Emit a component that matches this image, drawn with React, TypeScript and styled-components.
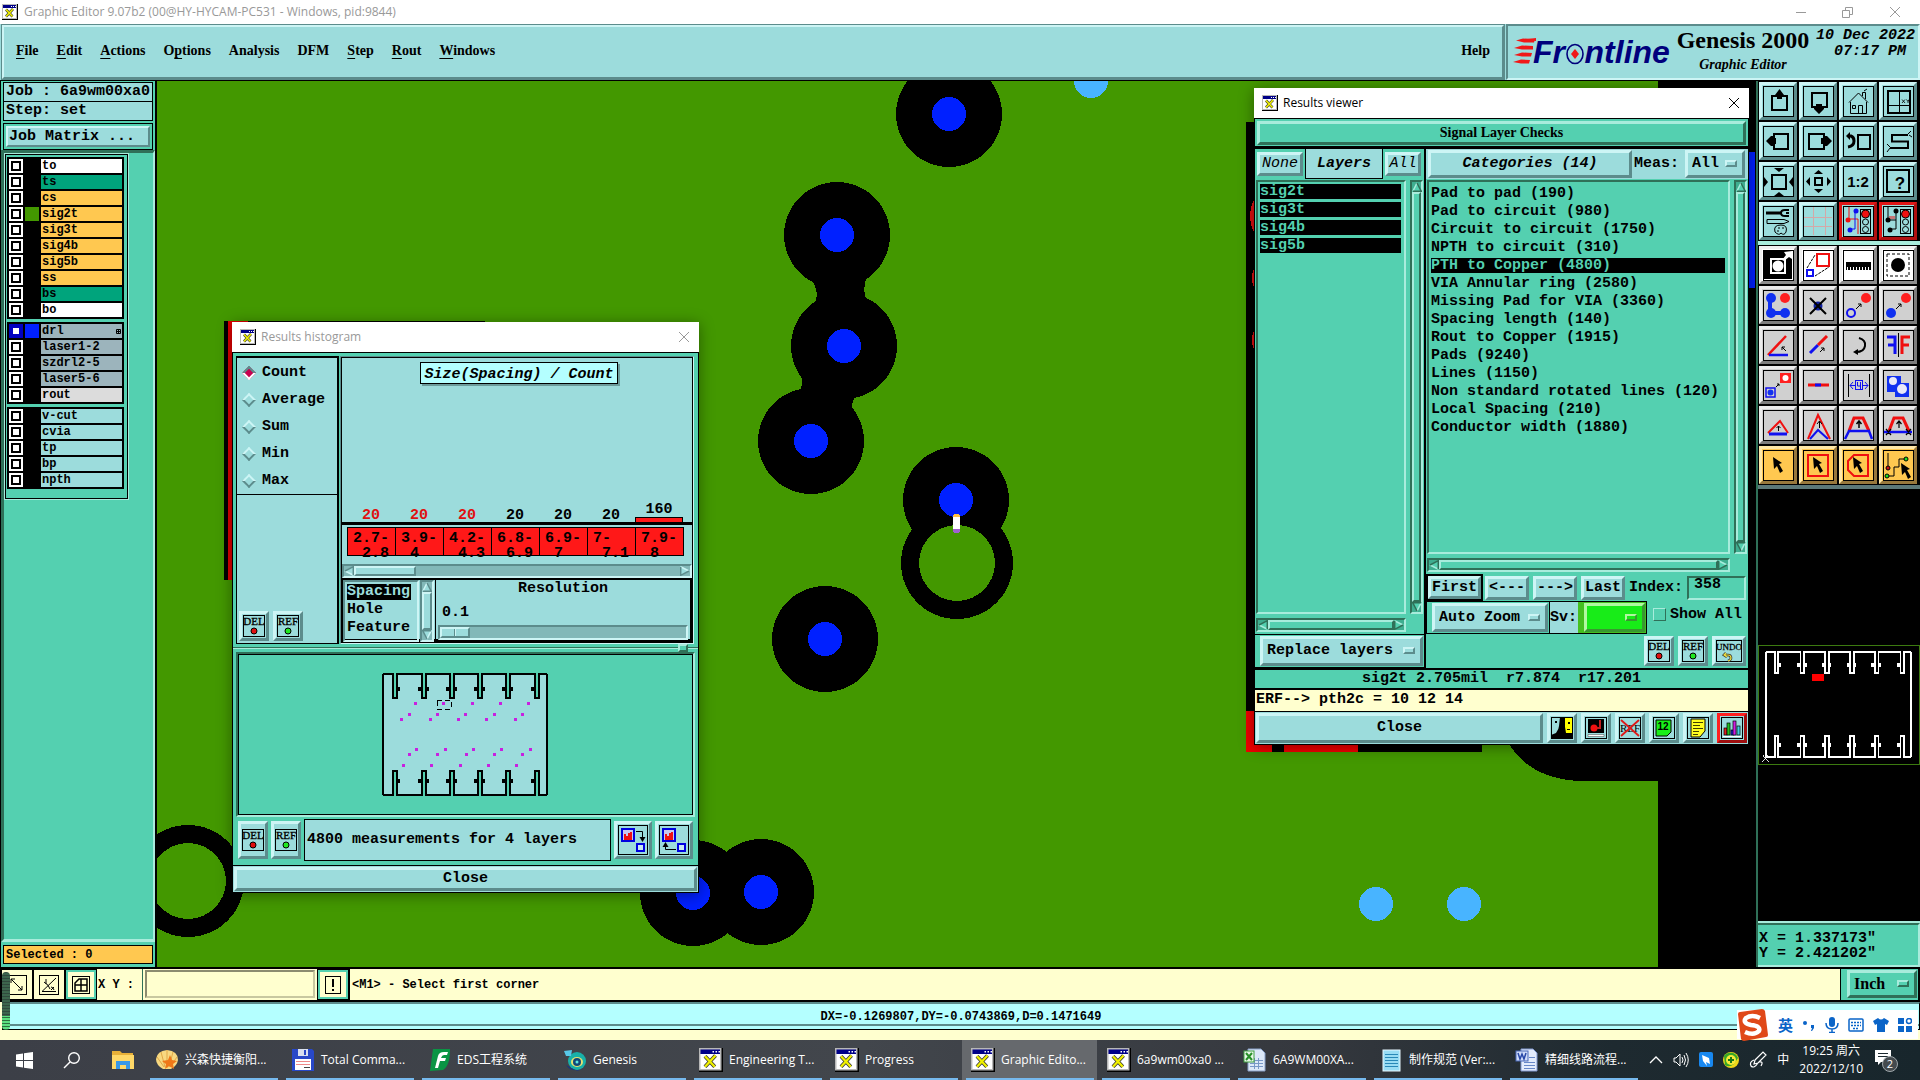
import React from 'react';
import styled, { createGlobalStyle, css } from 'styled-components';

const c = {
  teal: '#54d0b0',
  tealLight: '#a8ecdc',
  tealDark: '#2f7058',
  pale: '#9cdcdc',
  paleLight: '#cdf5f5',
  paleDark: '#5c8c8c',
  trough: '#82b8b8',
  cream: '#ffffcf',
  orange: '#ffc850',
  board: '#439800',
  blue: '#0020ff',
  red: '#ff1818',
};

const mono = `"Liberation Mono", "Noto Sans CJK SC", monospace`;
const serif = `"Liberation Serif", "Noto Sans CJK SC", serif`;
const sans = `"Open Sans", "Noto Sans CJK SC", sans-serif`;

const GlobalStyle = createGlobalStyle`
  *, *::before, *::after { box-sizing: border-box; }
  body { margin: 0; background: #000; color: #000; font: bold 15px/18px ${mono}; }
  button, input, select { font: inherit; color: inherit; margin: 0; padding: 0; border-radius: 0; }
  ul { list-style: none; margin: 0; padding: 0; }
  h1, h2, p { margin: 0; font: inherit; }
  svg { display: block; flex: none; }
`;

const bevel = (light: string, dark: string, w = 3) => css`
  border: ${w}px solid;
  border-color: ${light} ${dark} ${dark} ${light};
`;

/* ---------- page frame ---------- */

const Page = styled.div`
  display: flex;
  flex-direction: column;
  height: 100vh;
  overflow: hidden;
`;

const AppTitle = styled.header`
  display: flex;
  align-items: center;
  gap: 6px;
  height: 24px;
  padding-left: 2px;
  background: #fff;
  color: #999;
  font: 12px/18px ${sans};
  h1 { flex: 1; }
`;

const WinButtons = styled.div`
  display: flex;
  height: 100%;
`;

const WinButton = styled.button<{ $w?: number }>`
  display: grid;
  place-items: center;
  width: ${(p) => p.$w ?? 46}px;
  height: 100%;
  border: 0;
  background: transparent;
  color: inherit;
`;

const TopBar = styled.div`
  display: flex;
  height: 57px;
  background: ${c.pale};
  border-bottom: 1px solid #000;
`;

const MenuBar = styled.nav`
  display: flex;
  flex: 1;
  align-items: center;
  gap: 18px;
  padding: 0 12px 2px;
  ${bevel(c.paleLight, c.paleDark, 2)}
  outline: 1px solid ${c.paleDark};
  margin: 1px 2px;
  font: bold 14px/20px ${serif};
`;

const MenuButton = styled.button<{ $last?: boolean }>`
  border: 0;
  background: transparent;
  margin-left: ${(p) => (p.$last ? 'auto' : '0')};
  u { text-underline-offset: 3px; }
`;

const Brand = styled.div`
  display: flex;
  gap: 4px;
  width: 414px;
  padding: 0 2px 0 4px;
  ${bevel(c.paleDark, c.paleLight, 2)}
`;

const Product = styled.div`
  display: flex;
  flex-direction: column;
  align-items: center;
  width: 134px;
  white-space: nowrap;
  font: italic bold 14px/22px ${serif};
  strong { font: bold 24px/28px ${serif}; }
`;

const Clock = styled.time`
  flex: 1;
  padding: 2px 1px 0 0;
  text-align: right;
  white-space: pre;
  font: italic bold 15px/16px ${mono};
`;

const Middle = styled.main`
  display: flex;
  flex: 1;
  min-height: 0;
`;

/* ---------- left side bar ---------- */

const SideBar = styled.aside`
  display: flex;
  flex-direction: column;
  width: 157px;
  padding-top: 1px;
  background: ${c.teal};
  border-right: 2px solid #000;
  border-left: 1px solid #000;
`;

const InfoLine = styled.p<{ $bg?: string; $small?: boolean }>`
  height: ${(p) => (p.$small ? 19 : 20)}px;
  margin: 0 2px ${(p) => (p.$small ? 3 : -1)}px;
  padding-left: 2px;
  border: 1px solid #000;
  background: ${(p) => p.$bg ?? c.pale};
  font-size: ${(p) => (p.$small ? 12 : 15)}px;
  white-space: pre;
`;

const MatrixFrame = styled.div`
  height: 27px;
  margin: 3px 2px 0;
  padding: 2px;
  border: 1px solid #000;
`;

const MatrixButton = styled.button`
  width: 100%;
  height: 100%;
  text-align: left;
  padding-left: 1px;
  background: ${c.pale};
  line-height: 16px;
  ${bevel(c.paleLight, c.paleDark, 2)}
`;

const LayerArea = styled.div`
  flex: 1;
  border: 3px solid;
  border-color: ${c.tealDark} ${c.tealLight} ${c.tealLight} ${c.tealDark};
  border-right-width: 2px;
  margin-bottom: 3px;
`;

const LayerFrame = styled.div`
  display: flex;
  flex-direction: column;
  gap: 3px;
  width: 123px;
  margin: 1px;
  padding: 2px 2px 9px 1px;
  border: 1px solid #000;
  outline: 1px solid ${c.tealLight};
`;

const LayerGroup = styled.ul`
  padding: 2px 2px 0;
  width: 117px;
  background: #000;
`;

const LayerRow = styled.li`
  display: grid;
  grid-template-columns: 14px 14px 1fr;
  gap: 2px;
  height: 16px;
  padding-bottom: 2px;
`;

const LayerCheck = styled.input<{ $on?: boolean }>`
  appearance: none;
  width: 14px;
  height: 14px;
  border: 2px solid ${(p) => (p.$on ? '#0000c0' : '#fff')};
  background: #fff;
  box-shadow: inset 0 0 0 2px ${(p) => (p.$on ? '#0000c0' : '#000')};
`;

const Swatch = styled.span<{ $color?: string }>`
  background: ${(p) => p.$color ?? '#000'};
`;

const LayerName = styled.label<{ $bg: string }>`
  display: flex;
  justify-content: space-between;
  align-items: center;
  padding: 0 1px 0 1px;
  background: ${(p) => p.$bg};
  font-size: 12px;
  line-height: 13px;
`;

/* ---------- canvas and windows ---------- */

const Canvas = styled.section`
  position: relative;
  flex: 1;
  overflow: hidden;
  background: ${c.board};
`;

const Window = styled.div<{ $x: number; $y: number; $w: number }>`
  position: absolute;
  left: ${(p) => p.$x}px;
  top: ${(p) => p.$y}px;
  width: ${(p) => p.$w}px;
  background: ${c.teal};
  box-shadow: 0 2px 14px rgba(0, 0, 0, 0.4);
`;

const WinTitle = styled.header<{ $active?: boolean }>`
  display: flex;
  align-items: center;
  gap: 5px;
  height: 30px;
  padding-left: 8px;
  background: #fff;
  color: ${(p) => (p.$active ? '#000' : '#999')};
  font: 12px/18px ${sans};
  h2 { flex: 1; }
`;

const WinBody = styled.div`
  display: flex;
  flex-direction: column;
  border: 1px solid #000;
`;

const PaleButton = styled.button<{ $w?: number; $h?: number; $italic?: boolean; $thin?: boolean; $focus?: boolean }>`
  width: ${(p) => (p.$w ? `${p.$w}px` : 'auto')};
  height: ${(p) => p.$h ?? 24}px;
  flex: ${(p) => (p.$w ? 'none' : '1')};
  background: ${c.pale};
  line-height: 16px;
  font-style: ${(p) => (p.$italic ? 'italic' : 'normal')};
  font-weight: ${(p) => (p.$thin ? 'normal' : 'bold')};
  outline: ${(p) => (p.$focus ? '2px solid #000' : 'none')};
  white-space: nowrap;
  ${bevel(c.paleLight, c.paleDark, 3)}
`;

const PickBox = styled.span<{ $w?: number; $h: number; $bg?: string; $light?: string; $dark?: string }>`
  position: relative;
  display: block;
  width: ${(p) => (p.$w ? `${p.$w}px` : '100%')};
  height: ${(p) => p.$h}px;
  select {
    appearance: none;
    width: 100%;
    height: 100%;
    padding-left: 4px;
    background: ${(p) => p.$bg ?? c.pale};
    border: 3px solid;
    border-color: ${(p) => `${p.$light ?? c.paleLight} ${p.$dark ?? c.paleDark} ${p.$dark ?? c.paleDark} ${p.$light ?? c.paleLight}`};
  }
  &::after {
    content: '';
    position: absolute;
    right: 8px;
    top: calc(50% - 4px);
    width: 12px;
    height: 7px;
    border: 2px solid;
    border-color: ${(p) => `${p.$light ?? c.paleLight} ${p.$dark ?? c.paleDark} ${p.$dark ?? c.paleDark} ${p.$light ?? c.paleLight}`};
    pointer-events: none;
  }
`;

const IconButton = styled.button<{ $w?: number; $h?: number; $alert?: boolean }>`
  display: grid;
  place-items: center;
  flex: none;
  width: ${(p) => p.$w ?? 30}px;
  height: ${(p) => p.$h ?? 30}px;
  background: ${c.pale};
  ${(p) => (p.$alert ? bevel('#ff2020', '#a01010') : bevel(c.paleLight, c.paleDark))}
`;

/* scroll bars */
const Bar = styled.div<{ $vertical?: boolean; $teal?: boolean }>`
  display: flex;
  flex-direction: ${(p) => (p.$vertical ? 'column' : 'row')};
  align-items: stretch;
  background: ${(p) => (p.$teal ? '#3fae90' : c.trough)};
  ${(p) => (p.$teal ? bevel(c.tealDark, c.tealLight, 2) : bevel(c.paleDark, c.paleLight, 2))}
`;
const Thumb = styled.span<{ $size?: number; $teal?: boolean }>`
  flex: ${(p) => (p.$size ? `0 0 ${p.$size}px` : '1')};
  background: ${(p) => (p.$teal ? c.teal : c.pale)};
  ${(p) => (p.$teal ? bevel(c.tealLight, c.tealDark, 2) : bevel(c.paleLight, c.paleDark, 2))}
`;
const Rest = styled.span`
  flex: 1;
`;

const turn = { up: 0, right: 90, down: 180, left: 270 };
function Arrow({ to, teal }: { to: keyof typeof turn; teal?: boolean }) {
  const fill = teal ? c.teal : c.pale;
  const dark = teal ? c.tealDark : c.paleDark;
  const light = teal ? c.tealLight : c.paleLight;
  return (
    <svg width="10" height="10" viewBox="0 0 10 10">
      <g transform={`rotate(${turn[to]} 5 5)`}>
        <path d="M5 0 L10 10 H0 Z" fill={fill} />
        <path d="M5 1 L1 9" stroke={light} strokeWidth="1.5" />
        <path d="M5 1 L9.3 9.3 H1" stroke={dark} strokeWidth="1.5" fill="none" />
      </g>
    </svg>
  );
}

function ScrollBar({ vertical, teal, thumb }: { vertical?: boolean; teal?: boolean; thumb?: number }) {
  return (
    <Bar $vertical={vertical} $teal={teal}>
      <Arrow to={vertical ? 'up' : 'left'} teal={teal} />
      <Thumb $size={thumb} $teal={teal} />
      {thumb ? <Rest /> : null}
      <Arrow to={vertical ? 'down' : 'right'} teal={teal} />
    </Bar>
  );
}

/* ---------- histogram window ---------- */

const HistTop = styled.div`
  display: grid;
  grid-template-columns: 103px 1fr;
  gap: 1px;
  padding: 3px 4px 0 3px;
`;
const HistLeft = styled.div`
  display: flex;
  flex-direction: column;
  justify-content: space-between;
  background: ${c.pale};
  border: 1px solid #000;
  border-right-width: 2px;
`;
const RadioList = styled.fieldset`
  margin: 0;
  padding: 1px 0 0 7px;
  height: 138px;
  border: 0;
  border-top: 1px solid #000;
  border-bottom: 1px solid #000;
`;
const RadioRow = styled.label`
  display: flex;
  align-items: center;
  gap: 8px;
  height: 27px;
`;
const Diamond = styled.input`
  appearance: none;
  width: 10px;
  height: 10px;
  transform: rotate(45deg);
  background: ${c.pale};
  ${bevel(c.paleLight, c.paleDark, 2)}
  &:checked {
    background: #c80050;
    border-color: ${c.paleDark} #fff #fff ${c.paleDark};
  }
`;
const ButtonPair = styled.div`
  display: flex;
  gap: 4px;
  padding: 2px;
`;
const HistRight = styled.div`
  display: flex;
  flex-direction: column;
  background: ${c.pale};
  border: 2px solid #000;
  border-color: ${c.paleDark} ${c.paleLight} ${c.paleLight} ${c.paleDark};
  outline: 1px solid #000;
  outline-offset: -2px;
`;
const Chart = styled.div`
  display: flex;
  flex-direction: column;
  align-items: center;
  height: 206px;
  padding-top: 4px;
`;
const ChartTitle = styled.p`
  height: 22px;
  padding: 0 3px;
  margin-left: 4px;
  background: #b4ffff;
  border: 1px solid #000;
  box-shadow: 2px 2px 0 #6c9c9c;
  font-style: italic;
  line-height: 23px;
`;
const Plot = styled.div`
  display: grid;
  grid-template-columns: repeat(7, 48px);
  align-items: end;
  align-self: stretch;
  flex: 1;
  padding: 0 5px;
  border-bottom: 3px solid #000;
`;
const Column = styled.div<{ $red: boolean }>`
  text-align: center;
  line-height: 13px;
  color: ${(p) => (p.$red ? '#e01010' : '#000')};
`;
const Filled = styled.div`
  margin-top: 1px;
  background: ${c.red};
  border: 1px solid #000;
  border-bottom: 0;
`;
const Ranges = styled.div`
  display: grid;
  grid-template-columns: repeat(7, 48px);
  align-self: stretch;
  margin: 2px 5px 8px;
  border-left: 1px solid #000;
`;
const Range = styled.div`
  height: 29px;
  padding: 3px 0 0 5px;
  border: 1px solid #000;
  border-left: 0;
  background: ${c.red};
  line-height: 15px;
  span { display: block; }
  span + span { padding-left: 9px; }
`;
const HistBottom = styled.div`
  display: grid;
  grid-template-columns: 76px 14px 1fr;
  gap: 1px;
  height: 64px;
  border: 2px solid #000;
  border-bottom-width: 3px;
  border-left-width: 1px;
`;
const PaleList = styled.ul`
  padding: 2px;
  ${bevel(c.paleDark, c.paleLight, 2)}
`;
const PaleItem = styled.li<{ $on?: boolean }>`
  height: 16px;
  margin-bottom: 2px;
  line-height: 16px;
  width: 64px;
  color: ${(p) => (p.$on ? c.pale : '#000')};
  background: ${(p) => (p.$on ? '#000' : 'transparent')};
`;
const Resolution = styled.label`
  display: flex;
  flex-direction: column;
  justify-content: space-between;
  border-left: 1px solid #000;
  padding: 0 2px 2px;
  text-align: center;
  output { text-align: left; padding: 3px 0 0 4px; }
`;
const Slider = styled.input`
  appearance: none;
  width: 100%;
  height: 15px;
  background: ${c.trough};
  ${bevel(c.paleDark, c.paleLight, 2)}
  &::-webkit-slider-thumb {
    appearance: none;
    width: 30px;
    height: 11px;
    border: 2px solid;
    border-color: ${c.paleLight} ${c.paleDark} ${c.paleDark} ${c.paleLight};
    background: linear-gradient(90deg, ${c.pale} 12px, ${c.paleDark} 12px 13px, ${c.paleLight} 13px 14px, ${c.pale} 14px);
  }
`;
const Sash = styled.div`
  display: flex;
  justify-content: flex-end;
  align-items: center;
  height: 8px;
  padding-right: 10px;
  background: linear-gradient(${c.teal} 3px, ${c.tealDark} 3px 4px, ${c.tealLight} 4px 5px, ${c.teal} 5px);
  &::after {
    content: '';
    width: 10px;
    height: 8px;
    background: ${c.teal};
    ${bevel(c.tealLight, c.tealDark, 2)}
  }
`;
const MapPanel = styled.div`
  display: grid;
  place-items: center;
  height: 165px;
  margin: 0 3px;
  ${bevel(c.tealDark, c.tealLight, 2)}
  outline: 1px solid #000;
  outline-offset: -3px;
`;
const ToolRow = styled.div`
  display: flex;
  gap: 3px;
  align-items: center;
  height: 48px;
  padding: 0 5px 2px;
`;
const Message = styled.p`
  flex: 1;
  height: 42px;
  padding-left: 2px;
  border: 1px solid #000;
  background: ${c.pale};
  line-height: 40px;
`;
const CloseRow = styled.footer<{ $gap: number }>`
  display: flex;
  gap: ${(p) => p.$gap}px;
  align-items: center;
  padding: 1px;
  background: ${c.pale};
  border-top: 1px solid #000;
`;

/* ---------- results viewer ---------- */

const Heading = styled.div`
  height: 29px;
  padding: 2px;
  border-bottom: 2px solid #000;
  p {
    height: 24px;
    text-align: center;
    font: bold 14px/18px ${serif};
    ${bevel(c.tealLight, c.tealDark, 3)}
  }
`;
const ViewerCols = styled.div`
  display: grid;
  grid-template-columns: 171px 1fr;
  height: 522px;
  border-bottom: 2px solid #000;
`;
const LayersCol = styled.div`
  display: flex;
  flex-direction: column;
  border-right: 2px solid #000;
`;
const ChecksCol = styled.div`
  display: flex;
  flex-direction: column;
  min-width: 0;
`;
const ColHead = styled.div<{ $bg?: string }>`
  display: flex;
  align-items: center;
  gap: 2px;
  height: 31px;
  background: ${(p) => p.$bg ?? c.teal};
  padding: 0 3px 0 2px;
  border-top: 1px solid #000;
`;
const ColLabel = styled.p`
  flex: 1;
  align-self: stretch;
  background: ${c.pale};
  border: 1px solid #000;
  border-width: 0 1px 1px;
  line-height: 29px;
  text-align: center;
  font-style: italic;
`;
const ListGrid = styled.div`
  display: grid;
  grid-template-columns: 1fr 13px;
  grid-template-rows: 1fr 14px;
  flex: 1;
  gap: 4px;
  padding: 1px 1px 2px;
  min-height: 0;
`;
const TealList = styled.ul`
  padding: 2px 3px 0 2px;
  border: 2px solid;
  border-color: ${c.tealDark} ${c.tealLight} ${c.tealLight} ${c.tealDark};
`;
const TealItem = styled.li<{ $on?: boolean }>`
  height: 15px;
  margin-bottom: 3px;
  line-height: 15px;
  white-space: nowrap;
  color: ${(p) => (p.$on ? c.teal : '#000')};
  background: ${(p) => (p.$on ? '#000' : 'transparent')};
`;
const CheckList = styled(TealList)`
  padding-top: 4px;
`;
const ReplaceRow = styled.div`
  height: 34px;
  padding: 1px 1px 1px 5px;
  border: 1px solid #000;
  border-width: 1px 0 1px;
`;
const NavRow = styled.div`
  display: flex;
  align-items: center;
  gap: 4px;
  height: 27px;
  padding-left: 2px;
`;
const IndexLabel = styled.label`
  display: flex;
  flex: 1;
  gap: 4px;
  padding-right: 2px;
  line-height: 24px;
`;
const IndexInput = styled.input`
  flex: 1;
  min-width: 0;
  width: 20px;
  height: 24px;
  padding: 0 0 5px 5px;
  background: ${c.teal};
  ${bevel(c.tealDark, c.tealLight, 2)}
`;
const ZoomRow = styled.div`
  display: flex;
  height: 33px;
`;
const ZoomBox = styled.div`
  display: flex;
  border: 1px solid #000;
  padding: 1px;
  width: 124px;
  padding-left: 5px;
`;
const SvLabel = styled.label`
  width: 28px;
  background: ${c.pale};
  border: 1px solid #000;
  border-width: 1px 0;
  line-height: 32px;
`;
const SvBox = styled.div`
  width: 69px;
  padding: 1px 1px 1px 6px;
  background: #44c020;
  border: 1px solid #000;
  border-left: 0;
`;
const ShowAll = styled.label`
  display: flex;
  gap: 4px;
  padding: 5px 0 0 6px;
  white-space: nowrap;
  input {
    appearance: none;
    width: 13px;
    height: 13px;
    margin-top: 2px;
    ${bevel(c.tealLight, c.tealDark, 1)}
  }
`;
const EditRow = styled.div`
  display: flex;
  justify-content: flex-end;
  align-items: center;
  gap: 4px;
  height: 34px;
  padding-right: 2px;
`;
const Measure = styled.p`
  height: 20px;
  border-bottom: 2px solid #000;
  text-align: center;
  white-space: pre;
`;
const Erf = styled.p`
  height: 21px;
  padding-left: 1px;
  background: ${c.cream};
  line-height: 20px;
`;

/* ---------- right column ---------- */

const ToolColumn = styled.aside`
  display: flex;
  flex-direction: column;
  width: 164px;
  border-left: 2px solid ${c.tealDark};
  background: #000;
`;
const ToolGroup = styled.div<{ $edge: string }>`
  display: grid;
  grid-template-columns: repeat(4, 38px);
  gap: 2px;
  padding: 1px;
  border-bottom: 4px solid ${(p) => p.$edge};
`;
const ToolButton = styled.button<{ $kind: 'pale' | 'alert' | 'white' | 'gray' | 'orange' }>`
  display: grid;
  place-items: center;
  width: 38px;
  height: 38px;
  background: ${(p) => ({ pale: c.pale, alert: c.pale, white: '#fff', gray: '#d0d0d0', orange: c.orange })[p.$kind]};
  ${(p) =>
    ({
      pale: bevel(c.paleLight, c.paleDark),
      alert: bevel('#e01818', '#b01010'),
      white: bevel('#f0f0f0', '#8c8c8c'),
      gray: bevel('#ececec', '#7c7c7c'),
      orange: bevel('#ffe8a8', '#98783c'),
    })[p.$kind]}
`;
const Overview = styled.div`
  display: flex;
  flex: 1;
  flex-direction: column;
  justify-content: center;
  border-bottom: 2px solid ${c.tealLight};
`;
const OverviewBox = styled.div`
  display: grid;
  place-items: center;
  height: 120px;
  border: 1px solid #3c7a10;
`;
const Position = styled.div`
  height: 44px;
  padding: 6px 0 0 1px;
  background: ${c.teal};
  ${bevel(c.tealDark, c.tealLight, 2)}
  border-left: 0;
  line-height: 15px;
`;

/* ---------- bottom bars ---------- */

const CommandBar = styled.div`
  display: flex;
  height: 35px;
  background: ${c.cream};
  border: 2px solid #000;
  border-left-width: 1px;
  font-size: 12px;
`;
const SmallTool = styled.button<{ $on?: boolean }>`
  display: grid;
  place-items: center;
  width: 32px;
  height: 31px;
  background: ${c.cream};
  border: 3px solid;
  border-color: ${(p) => (p.$on ? c.teal : c.cream)};
  outline: 1px solid #000;
  outline-offset: -1px;
`;
const XYLabel = styled.label`
  width: 46px;
  padding-left: 1px;
  line-height: 32px;
  border-right: 1px solid ${c.tealDark};
  white-space: pre;
`;
const CommandInput = styled.input`
  width: 170px;
  height: 28px;
  margin: 1px 2px;
  padding-left: 5px;
  background: ${c.cream};
  border: 2px solid;
  border-color: #8c8c70 #c8c8a0 #c8c8a0 #8c8c70;
`;
const Prompt = styled.p`
  flex: 1;
  padding-left: 2px;
  border-left: 1px solid #000;
  line-height: 32px;
`;
const Units = styled.div`
  width: 78px;
  padding: 1px 0 0 6px;
  background: ${c.teal};
  border-left: 1px solid #000;
  font: bold 16px/20px ${serif};
`;
const StatusBar = styled.div`
  height: 28px;
  margin-left: 2px;
  background: #b4ffff;
  border: 1px solid #000;
  border-top: 2px solid ${c.paleDark};
  box-shadow: inset 0 -3px 0 #b4ffff, inset 0 -5px 0 ${c.paleDark};
  text-align: center;
  font-size: 12px;
  line-height: 27px;
`;
const FooterZone = styled.div`
  position: relative;
  background: ${c.cream};
  padding-bottom: 10px;
`;
const Meter = styled.span`
  position: absolute;
  left: 2px;
  top: 5px;
  width: 8px;
  height: 58px;
  border-radius: 4px;
  background: linear-gradient(rgba(50, 60, 60, 0.75) 76%, transparent 76%),
    repeating-linear-gradient(#2c7040 0 1px, #5ce080 1px 3px);
`;
const ImeBar = styled.div`
  position: absolute;
  right: 2px;
  bottom: 1px;
  display: flex;
  align-items: center;
  gap: 9px;
  height: 29px;
  padding-right: 6px;
  background: #fff;
  color: #0a64c8;
  font: bold 15px/20px ${sans};
`;

const TaskBar = styled.footer`
  display: flex;
  height: 40px;
  background: linear-gradient(90deg, #3c3f47 0%, #42464c 45%, #35383e 68%, #1e2a30 84%, #18262c 100%);
  color: #fff;
  font: 12px/18px ${sans};
`;
const Launch = styled.button<{ $w: number }>`
  display: grid;
  place-items: center;
  width: ${(p) => p.$w}px;
  border: 0;
  background: transparent;
`;
const Tasks = styled.div`
  display: flex;
  flex: 1;
  gap: 8px;
`;
const Task = styled.button<{ $active?: boolean }>`
  display: flex;
  align-items: center;
  gap: 6px;
  width: 128px;
  padding: 2px 0 0 5px;
  border: 0;
  border-bottom: 2px solid #76b9ed;
  background: ${(p) => (p.$active ? '#66696d' : 'transparent')};
  box-shadow: ${(p) => (p.$active ? '-4px 0 0 #66696d, 3px 0 0 #66696d' : 'none')};
  white-space: nowrap;
  overflow: hidden;
  text-align: left;
`;
const Tray = styled.div`
  display: flex;
  align-items: center;
  gap: 10px;
  padding-right: 21px;
  time { text-align: center; line-height: 18px; }
`;

/* ---------- drawings ---------- */

function XIcon({ size = 16 }: { size?: number }) {
  return (
    <svg width={size} height={size} viewBox="0 0 16 16">
      <rect width="16" height="16" fill="#000" />
      <rect x="0" y="0" width="15" height="15" fill="#b8b8b8" />
      <rect x="1" y="1" width="13" height="3" fill="#000088" />
      <path d="M9 2.5h1M11 2.5h1M13 2.5h1" stroke="#fff" />
      <rect x="1" y="4" width="13" height="10" fill="#fff" />
      <path d="M4 5.5 L10.5 12.5 M11 5 L4 12.5" stroke="#333" strokeWidth="2.6" />
      <path d="M4 5.5 L10.5 12.5 M11 5 L4 12.5" stroke="#f0f000" strokeWidth="1.6" />
    </svg>
  );
}

function CrossIcon() {
  return (
    <svg width="12" height="12" viewBox="0 0 12 12">
      <path d="M1 1 L11 11 M11 1 L1 11" stroke="currentColor" fill="none" />
    </svg>
  );
}

function Logo() {
  return (
    <svg width="160" height="44" viewBox="0 0 160 44">
      <g fill="#f01818" transform="translate(1 4)">
        <path d="M3 10.500 L10 8.500 L22 9 L21 12.500 H11 Z M1 18 L9 15.500 L20 16 V19.500 H9 Z M1 25 L9 22.500 L19 23 L18 26.500 H9 Z M0 32 L8 29.500 L17 30 L16 33.500 H8 Z" />
        <path d="M6 10 L23 8 V11 Z" />
      </g>
      <text x="21" y="37" fontFamily="Liberation Sans, sans-serif" fontWeight="bold" fontStyle="italic" fontSize="32" fill="#00007c">
        Fr<tspan fill="none">o</tspan>ntline
      </text>
      <ellipse cx="63" cy="28" rx="8" ry="9.500" fill="none" stroke="#00007c" strokeWidth="1.6" />
      <path d="M63 23 L67 28 L63 33 L59 28 Z" fill="#f01818" />
    </svg>
  );
}

function DelIcon({ label, color, w = 22 }: { label: string; color?: string; w?: number }) {
  return (
    <svg width={w} height="22" viewBox={`0 0 ${w} 22`}>
      <rect x=".5" y=".5" width={w - 1} height="21" fill="none" stroke="#000" />
      <text x={w / 2} y="10" textAnchor="middle" fontFamily="Liberation Serif, serif" fontSize={label.length > 3 ? 9 : 11} fontWeight="normal" stroke="#000" strokeWidth=".3">
        {label}
      </text>
      {color ? (
        <circle cx={w / 2} cy="16" r="3" fill={color} stroke="#000" />
      ) : (
        <g fill="none">
          <path d="M10 13 L8 15 L11 17 M9 15 h3 q3 0 3 3 q0 2 -3 3" stroke="#333" strokeWidth="2.600" />
          <path d="M10 13 L8 15 L11 17 M9 15 h3 q3 0 3 3 q0 2 -3 3" stroke="#f0e040" strokeWidth="1.200" />
        </g>
      )}
    </svg>
  );
}

function HistMove({ up }: { up?: boolean }) {
  return (
    <svg width="30" height="30" viewBox="0 0 30 30">
      <rect x=".5" y=".5" width="29" height="29" fill="none" stroke="#000" />
      <rect x="4" y="4" width="12" height="12" fill="#c8c8f0" stroke="#0000e0" strokeWidth="2" />
      <path d="M6 15 V9 H8 V11 H10 V8 H12 V7 H14 V15 Z" fill="#f01010" />
      <rect x="19" y="19" width="7" height="7" fill="#c8e8f0" stroke="#0000e0" strokeWidth="2" />
      {up ? (
        <>
          <path d="M17 24.500 H6.500 V20" fill="none" stroke="#000" />
          <path d="M3.500 22 L6.500 17 L9.500 22 Z" />
        </>
      ) : (
        <>
          <path d="M18 6.500 H24.500 V14" fill="none" stroke="#000" />
          <path d="M21.500 12 L24.500 17 L27.500 12 Z" />
        </>
      )}
    </svg>
  );
}

const slots = [10, 39, 67, 95, 123, 152];

function Panel({ line, fill, gap, w, h, children }: { line: string; fill: string; gap: string; w: number; h: number; children?: React.ReactNode }) {
  return (
    <svg width={w} height={h} viewBox="-1 -1 167 124" preserveAspectRatio="none" shapeRendering="crispEdges" overflow="visible">
      <rect x="0" y="0" width="164" height="121" rx="2" fill={fill} stroke={line} strokeWidth="2" />
      {slots.map((x, i) => (
        <g key={x} stroke={line} strokeWidth="2" fill="none">
          <path d={`M${x} -1 h3 v25 h-3 Z M${x} 97 h3 v25 h-3 Z`} fill={gap} stroke="none" />
          <path d={`M${x} -1 V24 H${x + 4} V-1 M${x} 122 V97 H${x + 4} V122`} />
          {i > 0 && <path d={`M${x - 4} 15 H${x} M${x - 4} 107 H${x}`} strokeWidth="4" />}
          {i < 5 && <path d={`M${x + 4} 15 H${x + 7} M${x + 4} 107 H${x + 7}`} strokeWidth="4" />}
        </g>
      ))}
      {children}
    </svg>
  );
}

const hits: [number, number[]][] = [
  [29, [32, 60, 89, 117, 145]],
  [40, [26, 54, 82, 111, 139]],
  [45, [18, 47, 75, 103, 132]],
  [75, [33, 62, 90, 118, 147]],
  [80, [26, 54, 83, 111, 139]],
  [91, [20, 48, 77, 105, 133]],
];

const ink = { fill: 'none', stroke: '#000', strokeWidth: 2 };
const redLine = { fill: 'none', stroke: '#f01010', strokeWidth: 2 };
const blueLine = { fill: 'none', stroke: '#1010f0', strokeWidth: 2 };
const pointer = <path d="M11 8 L20 14 L17 15 L21 22 L18 24 L15 17 L12 20 Z" />;
const letterStyle = { fontFamily: 'Liberation Sans, sans-serif', fontWeight: 'bold' as const };

const navIcons: [string, React.ReactNode][] = [
  ['Pan up', <><rect x="10" y="11" width="15" height="14" {...ink} /><path d="M13 10 L17.500 4 L22 10 V11 H20 V14 H15 V11 H13 Z" /></>],
  ['Pan down', <><rect x="10" y="8" width="15" height="14" {...ink} /><path d="M12 24 L17 29 L22 24 V23 H20 V19 H14 V23 H12 Z" /></>],
  ['Home', <><path d="M7 17.500 L16.500 8 L26 17.500 M8.500 17 V28.500 H24.500 V17 M16.500 28 V20.500 H20.500 V28 M10.500 20.500 H13.500 V23.500 H10.500 Z M20.500 11 V7.500 H23.500 V14 M22 6 L25 4" {...ink} strokeWidth="1" /></>],
  ['Window', <><rect x="6" y="6" width="22" height="22" {...ink} /><path d="M17.500 6 V28 M6 20.500 H28" {...ink} strokeWidth="1" /><path d="M20 14.500 L23 18 M23 14.500 L20 18 M24.500 14.500 L26 16.500 V18 M27 14.500 L26 16.500" {...ink} strokeWidth=".8" /></>],
  ['Pan left', <><rect x="12" y="9" width="14" height="15" {...ink} /><path d="M4 16 L9 11 H11 V13 H14 V19 H11 V21 H9 Z" /></>],
  ['Pan right', <><rect x="7" y="9" width="15" height="15" {...ink} /><path d="M30 16 L25 11 H23 V13 H19 V19 H23 V21 H25 Z" /></>],
  ['Previous view', <><rect x="16" y="10" width="12" height="14" {...ink} /><path d="M4 11 L8 7 V15 Z" /><path d="M7 11 H9 Q12 12 12 16 Q12 21 6 22" {...ink} strokeWidth="3" /></>],
  ['Serpentine', <><path d="M26 10 H10 V16.500 H26 V23 H8" {...ink} /><path d="M26 9 L29 6 M27 10 L30 12 M8 22 L5 19 M8 23 L5 27" {...ink} strokeWidth="1" /></>],
  ['Zoom in', <><rect x="10" y="10" width="14" height="14" {...ink} /><path d="M12 3 H22 L17 7 Z M12 31 H22 L17 27 Z M2 12 V22 L6 17 Z M31 12 V22 L27 17 Z" /></>],
  ['Zoom out', <><rect x="13" y="13" width="7" height="7" {...ink} /><path d="M12 9 H21 L16.500 5 Z M12 24 H21 L16.500 28 Z M8 12 V21 L4 16.500 Z M25 12 V21 L29 16.500 Z" /></>],
  ['Scale', <text x="16" y="22" textAnchor="middle" fontSize="15" {...letterStyle}>1:2</text>],
  ['Query', <><rect x="5" y="5" width="22" height="22" {...ink} /><text x="18" y="24" textAnchor="middle" fontSize="17" {...letterStyle}>?</text></>],
  ['Set up', <><path d="M4 8 H19" {...ink} strokeWidth="3" /><path d="M19 8 Q19 5 23 5 H27 M19 8 Q19 11 23 11 H27 M24 8 H27" {...ink} /><path d="M5 14.500 H22 L27 16.500 L22 18.500 H5 Z M13 27 Q11 20 19 20 Q26 20 24 27 Q22 31 19 28 Q17 31 13 27 M16 23 h2 M20 23 h2 M15 26 h2" {...ink} strokeWidth="1" /></>],
  ['Grid', <><path d="M11.500 2 V30 M23.500 2 V30 M2 12.500 H30 M2 21.500 H30" fill="none" stroke="#d4a8a8" /></>],
  ['Online checks', <><path d="M7 2 V14 H16 V29" {...redLine} strokeWidth="1" /><path d="M15 6 H13 V24 H9" {...blueLine} strokeWidth="1" /><circle cx="6" cy="15" r="2.500" fill="#f01010" /><circle cx="14" cy="6" r="2.500" fill="#1010f0" /><circle cx="8" cy="25" r="2.500" fill="#1010f0" /><rect x="18.500" y="4.500" width="10" height="24" {...ink} strokeWidth="1" /><circle cx="23.500" cy="9" r="4" fill="#f01010" stroke="#000" /><circle cx="23.500" cy="17" r="3" {...ink} strokeWidth="1" /><circle cx="23.500" cy="24.500" r="3" {...ink} strokeWidth="1" /></>],
  ['Online DRC', <><path d="M6 2 V14 M14 6 V24 H9 M6 15 H14" {...ink} strokeWidth="1" /><path d="M8 14 V11 M10 14 V11 M12 14 V11" {...redLine} strokeWidth="1" /><circle cx="6" cy="15" r="2.500" /><circle cx="14" cy="6" r="2.500" /><circle cx="8" cy="25" r="2.500" /><rect x="18.500" y="4.500" width="10" height="24" {...ink} strokeWidth="1" /><circle cx="23.500" cy="9" r="4" fill="#f01010" stroke="#000" /><circle cx="23.500" cy="17" r="3" {...ink} strokeWidth="1" /><circle cx="23.500" cy="24.500" r="3" {...ink} strokeWidth="1" /></>],
];

const editIcons: [string, React.ReactNode][] = [
  ['Highlight', <><rect x="2" y="2" width="28" height="28" /><path d="M30 2 L22 3 L24 6 L20 11 L22 12 L27 8 L30 10 Z" fill="#fff" /><rect x="9" y="10" width="14" height="14" fill="none" stroke="#fff" strokeWidth="2" /><circle cx="16" cy="17" r="5.500" fill="#fff" /></>],
  ['Enlarge', <><rect x="15" y="5" width="12" height="12" {...redLine} /><rect x="5" y="21" width="6" height="6" {...blueLine} /><path d="M5 19 L13 6 M13 27 L27 18" {...ink} strokeWidth="1" strokeDasharray="3 1" /></>],
  ['Measure', <path d="M4 13 H29 V21 H27 V18 H26 V21 H24 V18 H23 V21 H21 V18 H20 V21 H18 V18 H17 V21 H15 V18 H14 V21 H12 V18 H11 V21 H9 V18 H8 V21 H6 V18 H5 V21 H4 Z" />],
  ['Select area', <><rect x="5" y="5" width="22" height="22" {...ink} strokeWidth="1" strokeDasharray="3 2" /><circle cx="16" cy="16" r="7" /></>],
  ['Net', <><path d="M8 8 V24 H24" fill="none" stroke="#1030f0" strokeWidth="4" /><circle cx="9" cy="9" r="5" fill="#1030f0" /><circle cx="9" cy="24" r="5" fill="#1030f0" /><circle cx="23" cy="24" r="5" fill="#1030f0" /><circle cx="23" cy="9" r="5" fill="#ff2020" /></>],
  ['Delete', <><circle cx="16" cy="17" r="4.500" fill="#1020a0" /><path d="M8 9 L24 25 M24 9 L8 25" {...ink} /></>],
  ['Move', <><circle cx="9" cy="24" r="4" {...blueLine} /><circle cx="24" cy="9" r="5" fill="#ff2020" /><path d="M14 20 L19 15 M16 15 H19 V18" {...ink} strokeWidth="1" /></>],
  ['Copy', <><circle cx="9" cy="24" r="5" fill="#1030f0" /><circle cx="24" cy="9" r="5" fill="#ff2020" /><path d="M14 20 L19 15 M16 15 H19 V18" {...ink} strokeWidth="1" /></>],
  ['Change angle', <><path d="M6 26 L24 7" {...redLine} strokeWidth="2.500" /><path d="M7 26 H26" {...blueLine} strokeWidth="2.500" /><path d="M24 22 L20 18 M20 21 V18 H23" {...ink} strokeWidth="1" /></>],
  ['Stretch', <><path d="M8 24 L16 16" {...blueLine} strokeWidth="3" /><path d="M16 16 L25 7" {...redLine} strokeWidth="3" /><path d="M18 23 L22 19 M19 19 H22 V22" {...ink} strokeWidth="1" /></>],
  ['Rotate', <><path d="M17 9 Q24 11 23 17 Q22 23 14 23" {...ink} /><path d="M11 23 L16 20 V26 Z" /></>],
  ['Mirror', <><path d="M5 8 H13 V25 M6 16 H13" {...blueLine} strokeWidth="3" /><path d="M28 8 H20 V25 M27 16 H20" {...redLine} strokeWidth="3" /><path d="M16.500 4 V28" {...ink} strokeWidth="1" /></>],
  ['Copy to layer', <><rect x="4" y="19" width="9" height="9" {...blueLine} strokeWidth="1.500" /><circle cx="8.500" cy="23.500" r="3" fill="#1030f0" /><rect x="18" y="4" width="11" height="10" fill="#ff2020" /><circle cx="23.500" cy="9" r="3" fill="#fff" /><path d="M14 18 L17 15 M15 15 H17 V17" {...ink} strokeWidth="1" /></>],
  ['Break', <><path d="M6 16 H27" {...redLine} strokeWidth="3" /><path d="M13 16 H19" {...blueLine} strokeWidth="3" /></>],
  ['Dimension', <><path d="M6.500 5 V28 M27.500 5 V28" {...ink} strokeWidth="1" /><path d="M8 16.500 H26 M11 13 L8 16.500 L11 20 M23 13 L26 16.500 L23 20" {...blueLine} strokeWidth="1" /><rect x="13.500" y="11.500" width="7" height="9" fill="#d0d0d0" stroke="#1010f0" /><path d="M15.500 13 V17 H19 M18.500 13 V20" {...blueLine} strokeWidth="1" /></>],
  ['Polarity', <><rect x="5" y="7" width="14" height="16" fill="#1030f0" /><rect x="13" y="14" width="14" height="14" fill="#1030f0" /><circle cx="11" cy="12" r="4" fill="#e8e8f8" /><circle cx="20" cy="20" r="5" fill="#e8e8f8" /></>],
  ['Chamfer', <><path d="M6 24 L18 12 L26 24" {...redLine} /><path d="M7 25 H25" {...blueLine} strokeWidth="3" /><path d="M16.500 22 V17 M14.500 19 L16.500 17 L18.500 19" {...ink} strokeWidth="1" /></>],
  ['Spike', <><path d="M6 30 L16 6 L28 30" {...redLine} /><path d="M8 30 L16 21 L26 30" {...blueLine} /><path d="M17.500 19 V12 M15 15 L17.500 12 L20 15" {...ink} strokeWidth="1" /></>],
  ['Trapezoid', <><path d="M7 22 L12 9 H21 L27 22" {...redLine} strokeWidth="3" /><path d="M3 30 L7 22 H27 L30 30" {...blueLine} strokeWidth="2.500" /><path d="M17 19 V12 M14.500 15 L17 12 L19.500 15" {...ink} strokeWidth="1.500" /></>],
  ['Trim', <><path d="M7 22 L12 9 H21 L27 22" {...redLine} strokeWidth="3" /><path d="M2 23 H30" {...blueLine} strokeWidth="2.500" /><path d="M17 19 V12 M14.500 15 L17 12 L19.500 15 M4 20 L9 26 M9 20 L4 26 M24 20 L29 26 M29 20 L24 26" {...ink} strokeWidth="1.200" /></>],
  ['Select', pointer],
  ['Select in box', <><rect x="6" y="6" width="20" height="21" {...redLine} />{pointer}</>],
  ['Select in polygon', <><path d="M12 6 H26 V27 H12 L6 21 V12 Z" {...redLine} />{pointer}</>],
  ['Select net', <><path d="M6 4 V17 M6 27 H12 V18 H17 V10 H24" {...ink} strokeWidth="1" /><circle cx="6" cy="19" r="2" fill="#d01010" stroke="#000" /><circle cx="5" cy="27" r="2" fill="#20e020" stroke="#000" /><circle cx="24" cy="10" r="2" fill="#20e020" stroke="#000" /><g transform="translate(8 6)">{pointer}</g></>],
];

const navKind = (i: number) => (i > 13 ? 'alert' : 'pale') as const;
const editKind = (i: number) => (i < 4 ? 'white' : i < 20 ? 'gray' : 'orange') as const;

const Frame32 = ({ children }: { children: React.ReactNode }) => (
  <svg width="32" height="32" viewBox="0 0 32 32">
    <rect x="1.500" y="1.500" width="30" height="30" fill="none" stroke="#000" />
    {children}
  </svg>
);

/* ---------- data ---------- */

type Layer = { name: string; bg: string; color?: string; on?: boolean };
const sig = c.orange;
const groups: Layer[][] = [
  [
    { name: 'to', bg: '#fff' }, { name: 'ts', bg: '#00a47c' }, { name: 'cs', bg: sig }, { name: 'sig2t', bg: sig, color: c.board },
    { name: 'sig3t', bg: sig }, { name: 'sig4b', bg: sig }, { name: 'sig5b', bg: sig }, { name: 'ss', bg: sig },
    { name: 'bs', bg: '#00a47c' }, { name: 'bo', bg: '#fff' },
  ],
  [
    { name: 'drl', bg: '#9cb4bc', color: c.blue, on: true }, { name: 'laser1-2', bg: '#9cb4bc' }, { name: 'szdrl2-5', bg: '#9cb4bc' },
    { name: 'laser5-6', bg: '#9cb4bc' }, { name: 'rout', bg: '#dcdcdc' },
  ],
  ['v-cut', 'cvia', 'tp', 'bp', 'npth'].map((name) => ({ name, bg: c.pale })),
];

const menus: [string, string, string][] = [
  ['', 'F', 'ile'], ['', 'E', 'dit'], ['', 'A', 'ctions'], ['O', 'p', 'tions'], ['Analysis', '', ''],
  ['DFM', '', ''], ['', 'S', 'tep'], ['', 'R', 'out'], ['', 'W', 'indows'],
];

const bins: [number, string, string][] = [
  [20, '2.7-', '2.8'], [20, '3.9-', '4'], [20, '4.2-', '4.3'], [20, '6.8-', '6.9'], [20, '6.9-', '7'], [20, '7-', '7.1'], [160, '7.9-', '8'],
];

const checks: [string, number][] = [
  ['Pad to pad', 190], ['Pad to circuit', 980], ['Circuit to circuit', 1750], ['NPTH to circuit', 310], ['PTH to Copper', 4800],
  ['VIA Annular ring', 2580], ['Missing Pad for VIA', 3360], ['Spacing length', 140], ['Rout to Copper', 1915], ['Pads', 9240],
  ['Lines', 1150], ['Non standard rotated lines', 120], ['Local Spacing', 210], ['Conductor width', 1880],
];

const pads: [number, number][] = [[949, 114], [837, 235], [844, 346], [811, 441], [956, 500], [825, 639], [693, 893], [761, 892]];
const rings: [number, number][] = [[957, 563], [188, 881]];
const vias: [number, number][] = [[1091, 81], [1376, 904], [1464, 904]];

function BoardArt() {
  return (
    <svg width="100%" height="100%" shapeRendering="crispEdges">
      <g transform="translate(-157 -81)">
        <path d="M1658 0 H2600 V1400 H1658 V781 H1578 Q1530 778 1509 744 V700 H1658 Z" />
        <rect x="1246" y="122" width="236" height="630" />
        <path d="M1246 711 H1340 V752 H1284 V740 H1272 V752 H1246 Z M1284 740 H1358 V752 H1284 Z" fill="#f00000" />
        <path d="M1254 200 Q1246 216 1254 232 Z M1254 268 q-4 10 0 20 Z M1254 330 q-4 10 0 20 Z" fill="#e01010" />
        <rect x="1749" y="152" width="6" height="136" fill={c.blue} />
        <rect x="224" y="321" width="261" height="259" />
        <rect x="228" y="321" width="20" height="259" fill="#e00000" />
        <path d="M808 275 Q823 292 812 310 H872 Q859 292 868 275 Z M800 370 Q806 388 794 400 L852 412 Q850 392 872 382 Z" />
        {pads.map(([x, y]) => <circle key={`${x}-${y}`} cx={x} cy={y} r="53" />)}
        {rings.map(([x, y]) => (
          <g key={x}>
            <circle cx={x} cy={y} r="56" />
            <circle cx={x} cy={y} r="38" fill={c.board} />
          </g>
        ))}
        {pads.map(([x, y]) => <circle key={`${x}-${y}`} cx={x} cy={y} r="17" fill={c.blue} />)}
        {vias.map(([x, y]) => <circle key={x} cx={x} cy={y} r="17" fill="#48b4ff" />)}
        <rect x="953" y="514" width="7" height="18" rx="3" fill="#ffc040" />
        <rect x="953" y="524" width="7" height="9" rx="3" fill="#a060d0" />
        <rect x="953" y="517" width="7" height="12" fill="#fff" />
      </g>
    </svg>
  );
}

function Histogram() {
  return (
    <Window $x={75} $y={241} $w={467}>
      <WinTitle>
        <XIcon />
        <h2>Results histogram</h2>
        <WinButton $w={30} aria-label="Close window"><CrossIcon /></WinButton>
      </WinTitle>
      <WinBody>
        <HistTop>
          <HistLeft>
            <RadioList aria-label="Statistic">
              {['Count', 'Average', 'Sum', 'Min', 'Max'].map((t, i) => (
                <RadioRow key={t}><Diamond type="radio" name="stat" defaultChecked={i === 0} />{t}</RadioRow>
              ))}
            </RadioList>
            <ButtonPair>
              <IconButton><DelIcon label="DEL" color="#e01010" /></IconButton>
              <IconButton><DelIcon label="REF" color="#20e820" /></IconButton>
            </ButtonPair>
          </HistLeft>
          <HistRight>
            <Chart>
              <ChartTitle>Size(Spacing) / Count</ChartTitle>
              <Plot>
                {bins.map(([n, from], i) => (
                  <Column key={from} $red={i < 3}>
                    {n}
                    {n > 20 && <Filled style={{ height: Math.round(n / 32) }} />}
                  </Column>
                ))}
              </Plot>
              <Ranges>
                {bins.map(([, from, to]) => (
                  <Range key={from}><span>{from}</span><span>{to}</span></Range>
                ))}
              </Ranges>
            </Chart>
            <ScrollBar thumb={62} />
            <HistBottom>
              <PaleList>
                {['Spacing', 'Hole', 'Feature'].map((t, i) => <PaleItem key={t} $on={i === 0}>{t}</PaleItem>)}
              </PaleList>
              <ScrollBar vertical />
              <Resolution>
                Resolution
                <output>0.1</output>
                <Slider type="range" defaultValue={0} />
              </Resolution>
            </HistBottom>
          </HistRight>
        </HistTop>
        <Sash />
        <MapPanel>
          <Panel line="#000" fill={c.pale} gap={c.teal} w={167} h={124}>
            {hits.map(([y, xs]) => xs.map((x) => <rect key={`${x}-${y}`} x={x - 1} y={y - 1} width="3" height="3" fill="#c820e0" />))}
            <rect x="54" y="26" width="14" height="9" fill="none" stroke="#000" strokeDasharray="5 3" />
          </Panel>
        </MapPanel>
        <ToolRow>
          <IconButton $h={38}><DelIcon label="DEL" color="#e01010" /></IconButton>
          <IconButton $h={38}><DelIcon label="REF" color="#20e820" /></IconButton>
          <Message>4800 measurements for 4 layers</Message>
          <IconButton $w={38} $h={38} aria-label="Next"><HistMove /></IconButton>
          <IconButton $w={38} $h={38} aria-label="Previous"><HistMove up /></IconButton>
        </ToolRow>
        <CloseRow $gap={0}><PaleButton>Close</PaleButton></CloseRow>
      </WinBody>
    </Window>
  );
}

function Square22({ children, bg = 'none' }: { children: React.ReactNode; bg?: string }) {
  return (
    <svg width="22" height="22" viewBox="0 0 22 22">
      <rect x=".5" y=".5" width="21" height="21" fill={bg} stroke="#000" />
      {children}
    </svg>
  );
}

function Viewer() {
  return (
    <Window $x={1097} $y={7} $w={495}>
      <WinTitle $active>
        <XIcon />
        <h2>Results viewer</h2>
        <WinButton $w={30} aria-label="Close window"><CrossIcon /></WinButton>
      </WinTitle>
      <WinBody>
        <Heading><p>Signal Layer Checks</p></Heading>
        <ViewerCols>
          <LayersCol>
            <ColHead>
              <PaleButton $w={46} $italic $thin>None</PaleButton>
              <ColLabel>Layers</ColLabel>
              <PaleButton $w={36} $italic $thin>All</PaleButton>
            </ColHead>
            <ListGrid>
              <TealList>
                {['sig2t', 'sig3t', 'sig4b', 'sig5b'].map((t) => <TealItem key={t} $on>{t}</TealItem>)}
              </TealList>
              <ScrollBar vertical teal />
              <ScrollBar teal />
            </ListGrid>
            <ReplaceRow>
              <PickBox $h={30}><select aria-label="Layer action"><option>Replace layers</option></select></PickBox>
            </ReplaceRow>
          </LayersCol>
          <ChecksCol>
            <ColHead $bg={c.pale}>
              <PaleButton $w={204} $h={28} $italic>Categories (14)</PaleButton>
              <label htmlFor="meas">Meas:</label>
              <Rest />
              <PickBox $w={60} $h={28}><select id="meas"><option>All</option></select></PickBox>
            </ColHead>
            <ListGrid>
              <CheckList>
                {checks.map(([t, n]) => <TealItem key={t} $on={n === 4800}>{`${t} (${n})`}</TealItem>)}
              </CheckList>
              <ScrollBar vertical teal />
              <ScrollBar teal />
            </ListGrid>
            <NavRow>
              <PaleButton $w={53} $h={23} $focus>First</PaleButton>
              <PaleButton $w={44}>&lt;---</PaleButton>
              <PaleButton $w={44}>---&gt;</PaleButton>
              <PaleButton $w={44}>Last</PaleButton>
              <IndexLabel>Index:<IndexInput defaultValue="358" /></IndexLabel>
            </NavRow>
            <ZoomRow>
              <ZoomBox><PickBox $h={29}><select aria-label="Zoom mode"><option>Auto Zoom</option></select></PickBox></ZoomBox>
              <SvLabel htmlFor="sv">Sv:</SvLabel>
              <SvBox>
                <PickBox $h={29} $bg="#18ec18" $light="#b0f8a0" $dark="#389830">
                  <select id="sv"><option></option></select>
                </PickBox>
              </SvBox>
              <ShowAll><input type="checkbox" />Show All</ShowAll>
            </ZoomRow>
            <EditRow>
              <IconButton><DelIcon label="DEL" color="#e01010" /></IconButton>
              <IconButton><DelIcon label="REF" color="#20e820" /></IconButton>
              <IconButton $w={34}><DelIcon label="UNDO" w={26} /></IconButton>
            </EditRow>
          </ChecksCol>
        </ViewerCols>
        <Measure>{'sig2t 2.705mil  r7.874  r17.201'}</Measure>
        <Erf>ERF--&gt; pth2c = 10 12 14</Erf>
        <CloseRow $gap={4}>
          <PaleButton $h={30}>Close</PaleButton>
          <IconButton aria-label="Compare">
            <Square22 bg={c.pale}>
              <rect x="13" y="1" width="8" height="15" fill="#ffff00" />
              <path d="M9 0 H14 V10 L15 16 H22 V22 H0 V18 L5 16 Q8 12 8 9 Z M4 4 h2 v2 h-2 Z M17 5 h2 v2 h-2 Z M16 12 h3 v1 h-3 Z" />
            </Square22>
          </IconButton>
          <IconButton aria-label="Probe">
            <Square22>
              <rect x="3" y="2" width="16" height="14" />
              <circle cx="9" cy="11" r="3.500" fill="#f01010" />
              <path d="M12 11 H15 V3" stroke="#c02020" fill="none" strokeWidth="2" />
              <path d="M3 17.500 H19 V19.500 H3 Z" fill="#fff" stroke="#444" strokeWidth=".5" />
            </Square22>
          </IconButton>
          <IconButton aria-label="No reference">
            <Square22>
              <text x="11" y="15" textAnchor="middle" fontFamily="Liberation Serif, serif" fontSize="11" fontWeight="normal">REF</text>
              <path d="M2 3 L20 19 M20 3 L2 19" stroke="#e01818" strokeWidth="1.800" />
            </Square22>
          </IconButton>
          <IconButton aria-label="Numbered report">
            <Square22>
              <path d="M3 3 H18 V15 L14 19 H3 Z" fill="#18f018" stroke="#000" />
              <text x="10" y="13" textAnchor="middle" fontSize="10" {...letterStyle}>12</text>
            </Square22>
          </IconButton>
          <IconButton aria-label="Report">
            <Square22>
              <path d="M4 2 H18 V14 L13 20 H4 Z" fill="#ffff20" stroke="#000" />
              <path d="M6 5.500 H16 M6 8.500 H13 M6 11.500 H16 M6 14.500 H12 M6 17.500 H11" stroke="#404000" />
            </Square22>
          </IconButton>
          <IconButton $alert aria-label="Histogram">
            <Square22>
              <g stroke="#000" strokeWidth=".7">
                <rect x="3" y="11" width="3" height="7" fill="#e02020" />
                <rect x="6" y="6" width="3" height="12" fill="#20c020" />
                <rect x="10" y="13" width="3" height="5" fill="#2020e0" />
                <rect x="12" y="4" width="3" height="14" fill="#d020e0" />
                <rect x="16" y="9" width="3" height="9" fill="#40d0e0" />
              </g>
              <path d="M2 19.500 H20" stroke="#fff" />
            </Square22>
          </IconButton>
        </CloseRow>
      </WinBody>
    </Window>
  );
}

const tasks: [string, React.ReactNode, boolean?][] = [
  ['兴森快捷衡阳...', <svg width="24" height="24" viewBox="0 0 24 24"><path d="M12 2 Q23 3 23 12 Q22 18 16 21 L8 21 Q1 17 1 11 Q2 3 12 2" fill="#f8d880" /><path d="M12 2 V20 M6 4 L10 19 M18 4 L14 19 M2 9 L9 19 M22 9 L15 19" stroke="#e0a848" /><path d="M15 7 L17 12 L22 13 L18 16 L19 21 L14 18 L10 21 L11 16 L7 13 L13 12 Z" fill="#f07818" /></svg>],
  ['Total Comma...', <svg width="24" height="24" viewBox="0 0 24 24"><path d="M1 1 H21 L23 3 V23 H1 Z" fill="#2848c8" /><rect x="7" y="1" width="10" height="7" fill="#d8e0f0" /><rect x="13" y="2" width="2" height="5" fill="#2848c8" /><rect x="4" y="11" width="16" height="11" fill="#fff" /><path d="M5 13.500 H19 M5 16.500 H19" stroke="#e88" /><path d="M13 19.500h6" stroke="#444" /></svg>],
  ['EDS工程系统', <svg width="24" height="24" viewBox="0 0 24 24"><path d="M6 1 H23 Q23 18 16 22 L3 23 Z" fill="#0a9444" /><path d="M8 20 L11 8 Q12 4 17 4 H21 L20 7 H17 Q15 7 14 10 H19 L18 13 H13 L11 20 Z" fill="#fff" /></svg>],
  ['Genesis', <svg width="24" height="24" viewBox="0 0 24 24"><circle cx="14" cy="13" r="9" fill="#18b0a8" /><ellipse cx="14" cy="14" rx="6" ry="5" fill="#e8e070" /><circle cx="14" cy="14" r="4" fill="#104878" /><circle cx="14" cy="14" r="1.500" fill="#60e8e0" /><path d="M1 3 L9 2 L8 8 L3 8 Z" fill="#58c8e8" /><path d="M3 17 Q8 25 20 21 L14 23 Z" fill="#183880" /></svg>],
  ['Engineering T...', <XIcon size={24} />],
  ['Progress', <XIcon size={24} />],
  ['Graphic Edito...', <XIcon size={24} />, true],
  ['6a9wm00xa0 ...', <XIcon size={24} />],
  ['6A9WM00XA...', <svg width="24" height="24" viewBox="0 0 24 24"><path d="M5 1 H18 L22 5 V23 H5 Z" fill="#dce8f8" stroke="#88a0c8" /><path d="M7 12.500 H20 M7 15.500 H20 M7 18.500 H20 M11.500 10 V21 M15.500 10 V21" stroke="#7898c8" /><rect x="1" y="3" width="10" height="11" fill="#e8f8e8" stroke="#40a040" /><path d="M3 5 L9 12 M9 5 L3 12" stroke="#289028" strokeWidth="2" /></svg>],
  ['制作规范 (Ver:...', <svg width="24" height="24" viewBox="0 0 24 24"><rect x="4" y="2" width="17" height="21" fill="#98dcf4" stroke="#e8f8ff" /><path d="M6 6.500 H19 M6 9.500 H19 M6 12.500 H19 M6 15.500 H19 M6 18.500 H19" stroke="#2888b8" /></svg>],
  ['精细线路流程...', <svg width="24" height="24" viewBox="0 0 24 24"><path d="M6 1 H18 L22 5 V23 H6 Z" fill="#e4ecfc" stroke="#8098d0" /><path d="M9 14.500 H20 M9 17.500 H20 M9 20.500 H20 M14 9.500 H20" stroke="#6888c8" /><rect x="1" y="3" width="12" height="10" fill="#d0dcf8" stroke="#4868b8" /><path d="M3 5 L5 11 L7 6 L9 11 L11 5" fill="none" stroke="#2848a8" strokeWidth="1.500" /></svg>],
];

function TaskBarView() {
  return (
    <TaskBar>
      <Launch $w={48} aria-label="Start">
        <svg width="17" height="17" viewBox="0 0 17 17"><path d="M0 2.500 L7 1.500 V8 H0 Z M8 1.300 L17 0 V8 H8 Z M0 9 H7 V15.500 L0 14.500 Z M8 9 H17 V17 L8 15.700 Z" fill="#fff" /></svg>
      </Launch>
      <Launch $w={48} aria-label="Search">
        <svg width="18" height="18" viewBox="0 0 18 18"><circle cx="11" cy="7" r="5.300" fill="none" stroke="#fff" strokeWidth="1.400" /><path d="M7 11 L1 17" stroke="#fff" strokeWidth="1.500" /></svg>
      </Launch>
      <Launch $w={54} aria-label="Files">
        <svg width="22" height="20" viewBox="0 0 22 20"><path d="M0 1 H8 L10 3 H21 V19 H0 Z" fill="#e8b038" /><path d="M0 5 H22 V19 H0 Z" fill="#ffd868" /><path d="M4 11 H18 V19 H14 V15 H8 V19 H4 Z" fill="#3898e8" /></svg>
      </Launch>
      <Tasks>
        {tasks.map(([t, icon, active]) => <Task key={t} $active={active}>{icon}<span>{t}</span></Task>)}
      </Tasks>
      <Tray>
        <svg width="14" height="8" viewBox="0 0 14 8"><path d="M1 7 L7 1 L13 7" fill="none" stroke="#fff" strokeWidth="1.300" /></svg>
        <svg width="16" height="16" viewBox="0 0 16 16"><path d="M1 6 H3 L7 2 V14 L3 10 H1 Z M9 5 Q11 8 9 11 M11 3 Q14 8 11 13 M13 1 Q17.500 8 13 15" fill="none" stroke="#fff" /></svg>
        <svg width="14" height="16" viewBox="0 0 14 16"><rect width="14" height="15" rx="2" fill="#1888f0" /><path d="M3 3 L10 6 L11 12 L7 10 L8 14 L4 9 Z" fill="#fff" /></svg>
        <svg width="16" height="16" viewBox="0 0 16 16"><circle cx="8" cy="8" r="8" fill="#f0d818" /><path d="M1 4 A8 8 0 0 1 15 6 L11 12 Q6 16 2 13 Z" fill="#38a828" /><circle cx="8" cy="8" r="5" fill="#f8e838" /><path d="M8 5 V11 M5 8 H11" stroke="#187818" strokeWidth="2" /></svg>
        <svg width="18" height="18" viewBox="0 0 18 18"><path d="M6 9 L14 1 L17 4 L9 12 L5 13 Z M5 9 Q0 11 2 15 Q5 18 9 12 M10 11 Q15 10 12 15" fill="none" stroke="#fff" strokeWidth="1.200" /></svg>
        <span>中</span>
        <time>19:25 周六<br />2022/12/10</time>
        <svg width="26" height="26" viewBox="0 0 26 26"><path d="M2 3 H18 V15 H8 L5 18 V15 H2 Z" fill="#fff" /><path d="M5 6.500 H15 M5 9.500 H15" stroke="#1c2a30" /><circle cx="17" cy="17" r="7.500" fill="#444a4e" stroke="#a0a8ac" /><text x="17" y="21" textAnchor="middle" fontSize="11" fill="#fff" fontFamily="Open Sans, sans-serif">2</text></svg>
      </Tray>
    </TaskBar>
  );
}

export default function App() {
  return (
    <Page>
      <GlobalStyle />
      <AppTitle>
        <XIcon />
        <h1>Graphic Editor 9.07b2 (00@HY-HYCAM-PC531 - Windows, pid:9844)</h1>
        <WinButtons>
          <WinButton aria-label="Minimize"><svg width="10" height="10"><path d="M0 5.500 H10" stroke="currentColor" /></svg></WinButton>
          <WinButton aria-label="Restore"><svg width="11" height="11"><path d="M.5 3.500 H7.500 V10.500 H.5 Z M3.500 3 V.5 H10.500 V7.500 H8" fill="none" stroke="currentColor" /></svg></WinButton>
          <WinButton $w={50} aria-label="Close"><CrossIcon /></WinButton>
        </WinButtons>
      </AppTitle>
      <TopBar>
        <MenuBar>
          {menus.map(([a, u, b]) => <MenuButton key={a + u + b}>{a}{u && <u>{u}</u>}{b}</MenuButton>)}
          <MenuButton $last>Help</MenuButton>
        </MenuBar>
        <Brand>
          <Logo />
          <Product><strong>Genesis 2000</strong>Graphic Editor</Product>
          <Clock>{'10 Dec 2022\n07:17 PM '}</Clock>
        </Brand>
      </TopBar>
      <Middle>
        <SideBar>
          <InfoLine>Job : 6a9wm00xa0</InfoLine>
          <InfoLine>Step: set</InfoLine>
          <MatrixFrame><MatrixButton>Job Matrix ...</MatrixButton></MatrixFrame>
          <LayerArea>
            <LayerFrame>
              {groups.map((g) => (
                <LayerGroup key={g[0].name}>
                  {g.map((l) => (
                    <LayerRow key={l.name}>
                      <LayerCheck type="checkbox" id={`layer-${l.name}`} $on={l.on} />
                      <Swatch $color={l.color} />
                      <LayerName htmlFor={`layer-${l.name}`} $bg={l.bg}>
                        {l.name}
                        {l.on && <svg width="5" height="5"><path d="M.5 .5 H4.500 V4.500 H.5 Z M2.500 0 V5 M0 2.500 H5" fill="none" stroke="#000" /></svg>}
                      </LayerName>
                    </LayerRow>
                  ))}
                </LayerGroup>
              ))}
            </LayerFrame>
          </LayerArea>
          <InfoLine $bg={c.orange} $small>Selected : 0</InfoLine>
        </SideBar>
        <Canvas>
          <BoardArt />
          <Histogram />
          <Viewer />
        </Canvas>
        <ToolColumn>
          <ToolGroup $edge={c.tealLight}>
            {navIcons.map(([t, icon], i) => <ToolButton key={t} aria-label={t} $kind={navKind(i)}><Frame32>{icon}</Frame32></ToolButton>)}
          </ToolGroup>
          <ToolGroup $edge="#5c7878">
            {editIcons.map(([t, icon], i) => <ToolButton key={t} aria-label={t} $kind={editKind(i)}><Frame32>{icon}</Frame32></ToolButton>)}
          </ToolGroup>
          <Overview>
            <OverviewBox>
              <Panel line="#fff" fill="#000" gap="#000" w={148} h={108}>
                <rect x="52" y="25" width="14" height="8" fill="#ff0000" />
                <path d="M-4 118 L3 126 M3 118 L-4 126" stroke="#fff" strokeWidth="1" />
              </Panel>
            </OverviewBox>
          </Overview>
          <Position>X = 1.337173"<br />Y = 2.421202"</Position>
        </ToolColumn>
      </Middle>
      <FooterZone>
        <CommandBar>
          <SmallTool aria-label="Diagonal"><svg width="20" height="20"><rect x=".5" y=".5" width="19" height="19" fill="none" stroke="#000" /><path d="M4 4 L15 15 M4 8 V4 H8 M15 11 V15 H11" fill="none" stroke="#000" /></svg></SmallTool>
          <SmallTool aria-label="Angle"><svg width="20" height="20"><rect x=".5" y=".5" width="19" height="19" fill="none" stroke="#000" /><path d="M17 3 L3 16.500 H17 M7 4 V9 M5 7 Q10 10 11 14 M12 12 q2 0 3 3 M15 12 l-3 3" fill="none" stroke="#000" /></svg></SmallTool>
          <SmallTool $on aria-label="Grid"><svg width="20" height="20"><rect x="1.500" y="1.500" width="17" height="17" fill="none" stroke="#000" /><path d="M4 16 V8 L8 4 H16 V16 Z M4 10 H16 M10 4 V16" fill="none" stroke="#000" strokeWidth="1.500" /></svg></SmallTool>
          <XYLabel htmlFor="xy">{'X Y :'}</XYLabel>
          <CommandInput id="xy" />
          <SmallTool $on aria-label="Alert"><svg width="16" height="18"><rect x=".5" y=".5" width="15" height="17" fill="none" stroke="#000" /><path d="M8 3 V11 M8 13 V15" stroke="#000" strokeWidth="2" /></svg></SmallTool>
          <Prompt>&lt;M1&gt; - Select first corner</Prompt>
          <Units>
            <PickBox $h={28} $w={70} $bg={c.teal} $light={c.tealLight} $dark={c.tealDark}>
              <select aria-label="Units"><option>Inch</option></select>
            </PickBox>
          </Units>
        </CommandBar>
        <StatusBar>DX=-0.1269807,DY=-0.0743869,D=0.1471649</StatusBar>
        <Meter />
        <ImeBar>
          <svg width="32" height="32" viewBox="0 0 32 32"><path d="M1 5 Q1 3 3 3 L25 0 Q27 0 28 2 L31 26 Q31 28 29 28 L7 32 Q5 32 4 30 Z" fill="#e04818" /><path d="M23 9 Q15 5 9 9 Q5 14 14 16 Q24 17 22 22 Q17 27 8 23" fill="none" stroke="#fff" strokeWidth="4.500" /></svg>
          <span>英</span>
          <svg width="14" height="14" viewBox="0 0 14 14"><circle cx="3" cy="5" r="2" fill="#0a64c8" /><path d="M9 7 h3 v3 l-2 3 h-1 l1 -3 h-1 Z" fill="#0a64c8" /></svg>
          <svg width="14" height="16" viewBox="0 0 14 16"><rect x="4" y="0" width="6" height="10" rx="3" fill="#0a64c8" /><path d="M1 6 Q1 12 7 12 Q13 12 13 6 M7 12 V16 M4 15.500 H10" fill="none" stroke="#0a64c8" strokeWidth="1.500" /></svg>
          <svg width="16" height="14" viewBox="0 0 16 14"><rect x="1" y="1" width="14" height="12" rx="1" fill="none" stroke="#0a64c8" strokeWidth="1.500" /><path d="M3 4.500 H13 M3 7.500 H13 M5 10.500 H11" stroke="#0a64c8" strokeDasharray="2 1" strokeWidth="1.500" /></svg>
          <svg width="16" height="14" viewBox="0 0 16 14"><path d="M0 3 L5 0 Q8 3 11 0 L16 3 L14 7 L12 6 V14 H4 V6 L2 7 Z" fill="#0a64c8" /></svg>
          <svg width="14" height="14" viewBox="0 0 14 14"><path d="M0 0 H6 V6 H0 Z M0 8 H6 V14 H0 Z M8 8 H14 V14 H8 Z" fill="#0a64c8" /><circle cx="11" cy="3" r="2.500" fill="none" stroke="#0a64c8" strokeWidth="1.500" /></svg>
        </ImeBar>
      </FooterZone>
      <TaskBarView />
    </Page>
  );
}
